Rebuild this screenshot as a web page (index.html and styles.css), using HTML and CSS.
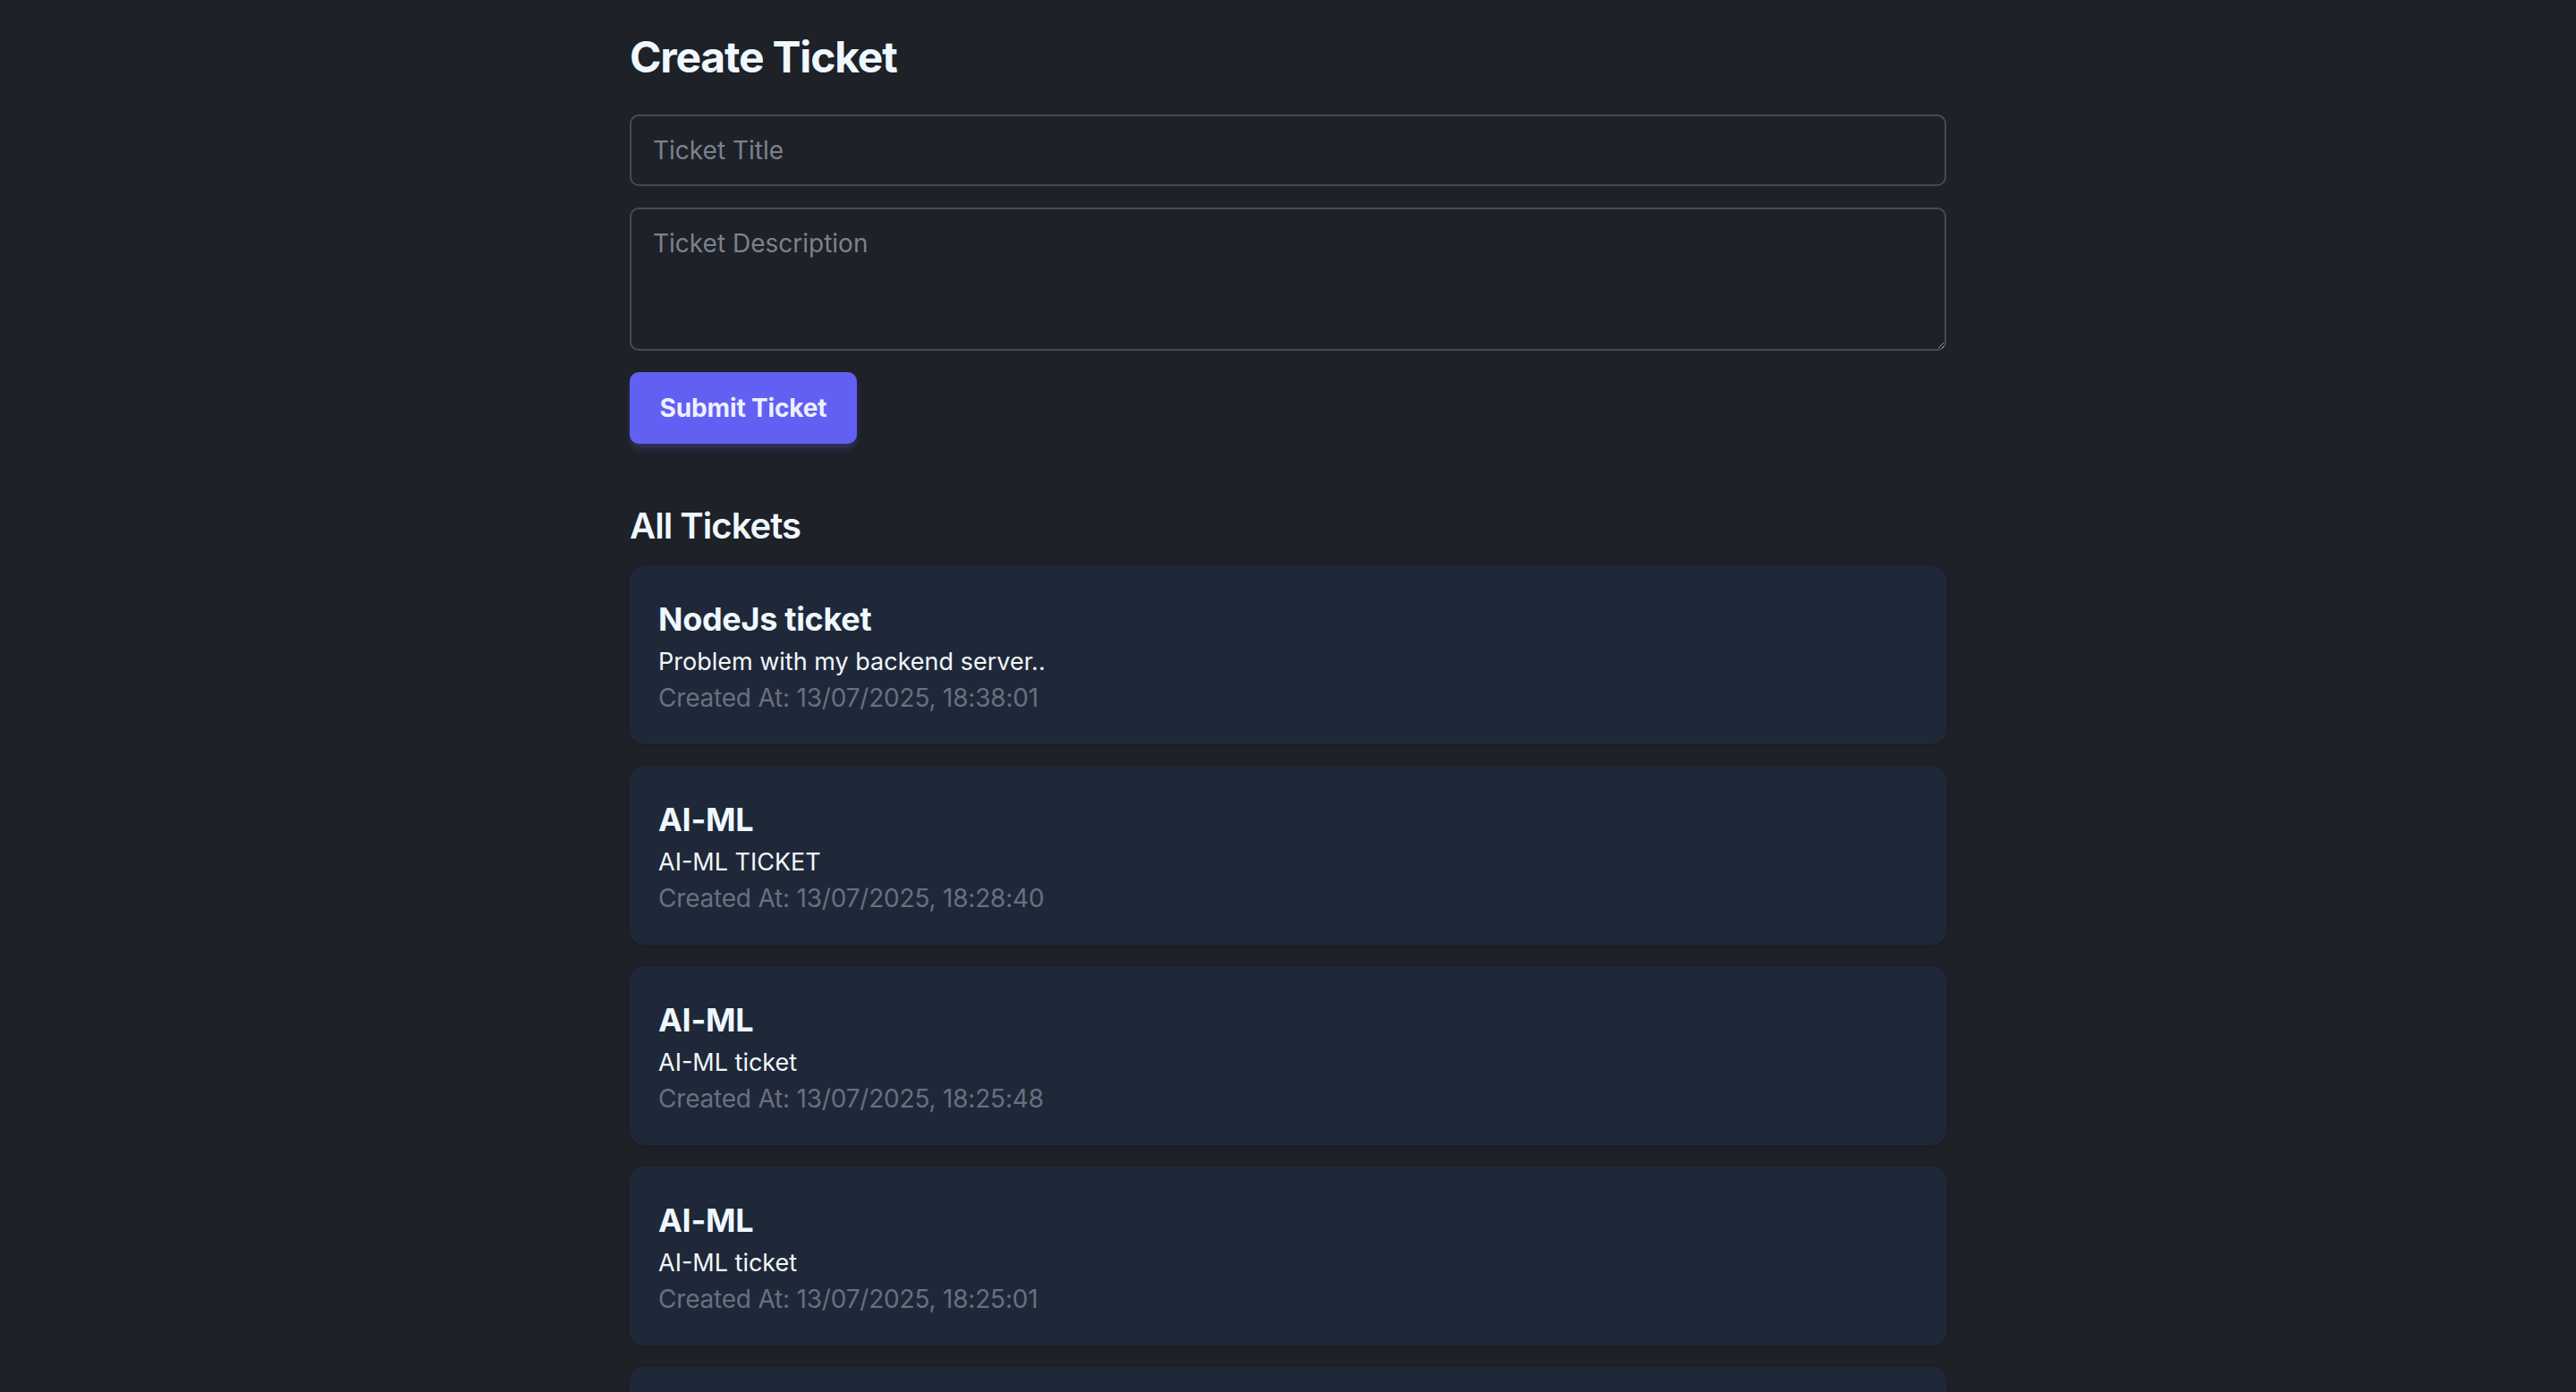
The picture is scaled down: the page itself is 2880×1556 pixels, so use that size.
FILE: index.html
```html
<!DOCTYPE html>
<html lang="en">
<head>
<meta charset="utf-8">
<title>Tickets</title>
<link rel="stylesheet" href="styles.css">
</head>
<body>
<main class="page">
  <h1 class="page-title">Create Ticket</h1>
  <form class="ticket-form">
    <input class="field" type="text" placeholder="Ticket Title">
    <textarea class="field field-area" rows="3" placeholder="Ticket Description"></textarea>
    <button class="submit-btn" type="button">Submit Ticket</button>
  </form>
  <h2 class="section-title">All Tickets</h2>
  <ul class="ticket-list">
    <li class="ticket-card">
      <h3 class="ticket-title">NodeJs ticket</h3>
      <p class="ticket-desc">Problem with my backend server..</p>
      <p class="ticket-date">Created At: 13/07/2025, 18:38:01</p>
    </li>
    <li class="ticket-card">
      <h3 class="ticket-title">AI-ML</h3>
      <p class="ticket-desc">AI-ML TICKET</p>
      <p class="ticket-date">Created At: 13/07/2025, 18:28:40</p>
    </li>
    <li class="ticket-card">
      <h3 class="ticket-title">AI-ML</h3>
      <p class="ticket-desc">AI-ML ticket</p>
      <p class="ticket-date">Created At: 13/07/2025, 18:25:48</p>
    </li>
    <li class="ticket-card">
      <h3 class="ticket-title">AI-ML</h3>
      <p class="ticket-desc">AI-ML ticket</p>
      <p class="ticket-date">Created At: 13/07/2025, 18:25:01</p>
    </li>
    <li class="ticket-card">
      <h3 class="ticket-title">AI-ML</h3>
      <p class="ticket-desc">AI-ML ticket</p>
      <p class="ticket-date">Created At: 13/07/2025, 18:24:30</p>
    </li>
  </ul>
</main>
</body>
</html>
```

FILE: styles.css
```css
* { box-sizing: border-box; }

html, body {
  margin: 0;
  padding: 0;
  background: #1e2128;
}

body {
  font-family: Inter, "Noto Sans", "Liberation Sans", sans-serif;
  color: #eef5fc;
}

.page {
  width: 1472px;
  margin: 0 auto;
  padding-top: 32px;
}

.page-title {
  margin: 0 0 32px;
  font-size: 48px;
  line-height: 64px;
  font-weight: 700;
  color: #eff8ff;
  letter-spacing: -1.2px;
}

.ticket-form {
  display: flex;
  flex-direction: column;
  align-items: flex-start;
  gap: 24px;
}

.field {
  display: block;
  width: 100%;
  margin: 0;
  padding: 18px 24px;
  border: 2px solid #474b53;
  border-radius: 10px;
  background: #1e2128;
  color: #eef5fc;
  font-family: inherit;
  font-size: 28px;
  line-height: 40px;
  outline: none;
}

.field::placeholder {
  color: #7b828d;
  opacity: 1;
}

.field-area {
  height: 160px;
  resize: vertical;
}

.submit-btn {
  width: 254px;
  height: 80px;
  padding: 0 32px;
  border: none;
  border-radius: 10px;
  background: #6160f3;
  color: #eef0ff;
  font-family: inherit;
  font-size: 28px;
  font-weight: 700;
  line-height: 48px;
  letter-spacing: -0.15px;
  box-shadow: 0 6px 10px -2px rgba(99, 102, 241, 0.35);
  cursor: pointer;
}

.section-title {
  margin: 64px 0 16px;
  font-size: 40px;
  line-height: 56px;
  font-weight: 600;
  color: #eff8ff;
  letter-spacing: -0.95px;
}

.ticket-list {
  list-style: none;
  margin: 0;
  padding: 0;
  display: flex;
  flex-direction: column;
  gap: 24px;
}

.ticket-card {
  padding: 32px;
  border-radius: 16px;
  background: #1f2838;
  box-shadow: 0 2px 6px rgba(0, 0, 0, 0.15);
}

.ticket-title {
  margin: 0;
  font-size: 36px;
  line-height: 56px;
  font-weight: 700;
  color: #eff8ff;
  letter-spacing: -0.3px;
}

.ticket-desc {
  margin: 0;
  font-size: 27px;
  line-height: 40px;
  color: #f2f6fb;
}

.ticket-date {
  margin: 0;
  font-size: 28px;
  line-height: 40px;
  color: #687080;
  letter-spacing: -0.2px;
}
```
